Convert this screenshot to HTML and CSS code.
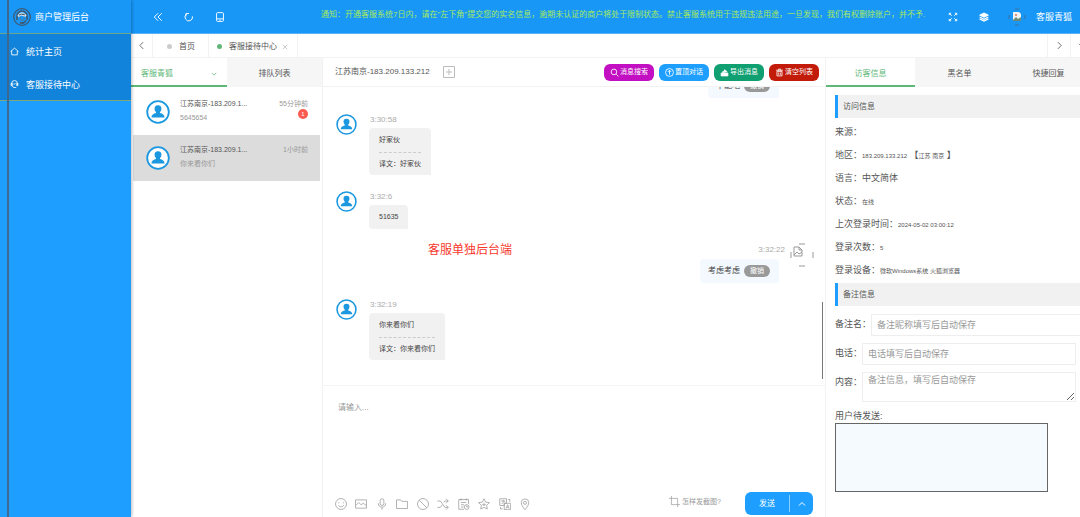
FILE: index.html
```html
<!DOCTYPE html>
<html lang="zh-CN">
<head>
<meta charset="utf-8">
<title>商户管理后台</title>
<link rel="stylesheet" href="styles.css">
</head>
<body>
<svg class="sprite" aria-hidden="true">
  <symbol id="user" viewBox="0 0 24 24"><circle cx="12" cy="12" r="10.8" fill="#fff" stroke="#1b98e0" stroke-width="1.8"/><path d="M12 5.300a3.400 3.400 0 0 1 3.400 3.600c0 1.400-.6 2.500-1.400 3.100v1.100c2.400.5 4.600 1.700 4.600 4.400H5.400c0-2.700 2.200-3.900 4.600-4.400V12c-.8-.6-1.400-1.700-1.400-3.100A3.400 3.400 0 0 1 12 5.300z" fill="#1b98e0" stroke="none"/></symbol>
</svg>
<aside class="sidebar">
  <div class="brand">
    <svg class="logo" viewBox="0 0 20 20"><circle cx="10" cy="10" r="8.300" fill="none" stroke="#3f5871" stroke-width="1.200"/><path d="M5 13V9a5 5 0 0 1 10 0v4M8 15.500c2 1.200 5 .5 6-2" fill="none" stroke="#3f5871" stroke-width="1.600"/><path d="M6 9c1-4 7-4 8 0-3 0-4-1-5-1s-1 2-3 1z" fill="#3f5871"/><path d="M8 10v2c1 2 3 2 4 0v-2" fill="none" stroke="#55718a"/></svg>
    <span>商户管理后台</span>
  </div>
  <nav class="menu">
    <a href="#"><svg class="i9" viewBox="0 0 16 16"><path d="M1 8l7-6 7 6M3 7v7h10V7"/></svg>统计主页</a>
    <a href="#"><svg class="i9" viewBox="0 0 16 16"><path d="M3 9V6a5 5 0 0 1 10 0v3M2 6v4h2V6zM12 6v4h2V6zM4 10c1 4 5 4 7 3M6 7c2 1 3 0 4-1"/></svg>客服接待中心</a>
  </nav>
</aside>
<div class="main">
  <header class="topbar">
    <div class="tools">
      <button aria-label="收起"><svg viewBox="0 0 16 16"><path d="M8 2L2 8l6 6M14 2L8 8l6 6"/></svg></button>
      <button aria-label="刷新"><svg viewBox="0 0 16 16"><path d="M4 3.500A6 6 0 1 0 13.500 7M3 7V2.500h5"/></svg></button>
      <button aria-label="手机"><svg viewBox="0 0 16 16"><path d="M4 1h8q1.500 0 1.500 1.500v11Q13.500 15 12 15H4q-1.500 0-1.500-1.500v-11Q2.500 1 4 1zM3 11h10M7 13h2"/></svg></button>
    </div>
    <p class="notice">通知：开通客服系统7日内，请在"左下角"提交您的实名信息，逾期未认证的商户将处于限制状态。禁止客服系统用于违规违法用途，一旦发现，我们有权删除账户，并不予.</p>
    <div class="account">
      <button aria-label="全屏"><svg viewBox="0 0 16 16"><path d="M2 5V2h3M2 2l4 4M11 2h3v3M14 2l-4 4M2 11v3h3M2 14l4-4M14 11v3h-3M14 14l-4-4"/></svg></button>
      <button aria-label="主题"><svg viewBox="0 0 16 16"><path d="M8 1.500l7 3.500-7 3.500L1 5z" fill="#fff"/><path d="M1 8l7 3.500L15 8M1 11l7 3.500 7-3.500" stroke-width="2"/></svg></button>
      <svg class="photo" viewBox="0 0 18 18"><path d="M7 1h4M7 17h4M1 7v4M17 7v4" stroke="#3c6fa0"/><path d="M5 4h6l2 2v7H5z" fill="#eef3f5" stroke="none"/><path d="M5 12l3-3 2 2 3-2v4H5z" fill="#6d8a78" stroke="none"/><circle cx="8" cy="7" r="1" fill="#e0794a" stroke="none"/></svg>
      <span>客服青狐</span>
    </div>
  </header>
  <nav class="tabs">
    <button class="step" aria-label="向左"><svg viewBox="0 0 16 16"><path d="M11 2L5 8l6 6"/></svg></button>
    <a class="tab" href="#"><i class="dot"></i>首页</a>
    <a class="tab" href="#"><i class="dot on"></i>客服接待中心<svg class="close" viewBox="0 0 16 16"><path d="M2 2l12 12M14 2L2 14"/></svg></a>
    <button class="step last" aria-label="向右"><svg viewBox="0 0 16 16"><path d="M5 2l6 6-6 6"/></svg></button>
    <button class="step cut" aria-label="更多"><svg viewBox="0 0 16 16"><path d="M2 5l6 6 6-6"/></svg></button>
  </nav>
  <div class="work">
    <section class="queue">
      <div class="heads">
        <button class="head active agent">客服青狐<svg viewBox="0 0 16 16"><path d="M2 5l6 6 6-6"/></svg></button>
        <button class="head">排队列表</button>
      </div>
      <ul class="visitors">
        <li><svg class="face"><use href="#user"/></svg><div class="who"><b>江苏南京-183.209.1...</b><span>5645654</span></div><div class="when"><time>55分钟前</time><em>1</em></div></li>
        <li class="current"><svg class="face"><use href="#user"/></svg><div class="who"><b>江苏南京-183.209.1...</b><span>你来看你们</span></div><div class="when"><time>1小时前</time></div></li>
      </ul>
    </section>
    <section class="chat">
      <div class="chathead">
        <span>江苏南京-183.209.133.212</span>
        <button class="add" aria-label="添加"><svg viewBox="0 0 12 12"><path d="M.5.5h11v11H.5zM6 3v6M3 6h6"/></svg></button>
        <div class="actions">
          <button class="purple"><svg viewBox="0 0 16 16"><circle cx="7" cy="7" r="5"/><path d="M11 11l4 4"/></svg>消息搜索</button>
          <button class="blue"><svg viewBox="0 0 16 16"><circle cx="8" cy="8" r="7"/><path d="M8 12V4M5 7l3-3 3 3"/></svg>置顶对话</button>
          <button class="green"><svg viewBox="0 0 16 16"><path d="M2 9h12v5H2zM5 9V6h3V3l5 4" fill="#fff"/></svg>导出消息</button>
          <button class="red"><svg viewBox="0 0 16 16"><path d="M2 4h12M6 4V2h4v2M3.500 6h9v8h-9zM6.500 8v4M9.500 8v4"/></svg>清空列表</button>
        </div>
      </div>
      <div class="log">
        <div class="msg mine"><div class="body"><time>3:30:22</time><div class="bubble">不能吧<button>撤销</button></div></div><i class="pic"></i></div>
        <div class="msg"><svg class="pic"><use href="#user"/></svg><div class="body"><time>3:30:58</time><div class="bubble"><p>好家伙</p><p class="tr">译文：好家伙</p></div></div></div>
        <div class="msg"><svg class="pic"><use href="#user"/></svg><div class="body"><time>3:32:6</time><div class="bubble"><p>51635</p></div></div></div>
        <div class="msg mine"><div class="body"><time>3:32:22</time><div class="bubble">考虑考虑<button>撤销</button></div></div><svg class="pic broken" viewBox="0 0 24 24"><path d="M9 1h6M9 23h6M1 9v6M23 9v6" stroke="#999"/><path d="M4 4h5l3 3v6H4zM9 4v3h3M4 12l3-3 2 2 3-2" stroke="#999"/></svg></div>
        <div class="msg"><svg class="pic"><use href="#user"/></svg><div class="body"><time>3:32:19</time><div class="bubble"><p>你来看你们</p><p class="tr">译文：你来看你们</p></div></div></div>
        <strong class="mark">客服单独后台端</strong>
        <i class="thumb"></i>
      </div>
      <div class="compose">
        <textarea aria-label="消息" placeholder="请输入..."></textarea>
        <div class="foot">
          <div class="icons">
            <button aria-label="表情"><svg viewBox="0 0 16 16"><circle cx="8" cy="8" r="7.300"/><path d="M5 5.500v1.500M11 5.500v1.500M4.500 9.500c1 3 6 3 7 0"/></svg></button>
            <button aria-label="图片"><svg viewBox="0 0 16 16"><path d="M.7 2.500h14.600v11H.7zM1 10l4-4 3 3 3-2 4 3"/></svg></button>
            <button aria-label="语音"><svg viewBox="0 0 16 16"><rect x="5.500" y="1" width="5" height="9" rx="2.500"/><path d="M3 7c0 7 10 7 10 0M8 12.500V15.500"/></svg></button>
            <button aria-label="文件"><svg viewBox="0 0 16 16"><path d="M.7 2.500h5.500l1.500 2h7.600v9.500H.7z"/></svg></button>
            <button aria-label="拉黑"><svg viewBox="0 0 16 16"><circle cx="8" cy="8" r="7.300"/><path d="M3 3l10 10"/></svg></button>
            <button aria-label="转接"><svg viewBox="0 0 16 16"><path d="M.5 4h4l6 8.500h4.500M.5 12.500h4L7 9M9 6l1.500-2H15M12 1l3 3-3 3M12 9.500l3 3-3 3"/></svg></button>
            <button aria-label="工单"><svg viewBox="0 0 16 16"><path d="M14 8V2H1v13h7M4 .5v3M11 .5v3M4 6h7M4 9h4M4 12h3"/><circle cx="11.500" cy="12" r="3.200"/><path d="M11.500 10v2h2"/></svg></button>
            <button aria-label="评价"><svg viewBox="0 0 16 16"><path d="M8 1l2.200 4.500 5 .7-3.700 3.500.9 5L8 12.500l-4.400 2.200.9-5L.8 6.200l5-.7zM5.500 9h5M8 6.500v4"/></svg></button>
            <button aria-label="翻译"><svg viewBox="0 0 16 16"><path d="M1 1h9v6H7v3H1zM3 4h5M5.500 2.500v2M3.500 8l4-4M7 7h8.500v8.500H7zM9.500 14l2-5 2 5M10.500 12.500h2M12 2h2.500v3M2 12v2.500h3"/></svg></button>
            <button aria-label="位置"><svg viewBox="0 0 16 16"><path d="M8 15.500C5 12 3 9 3 6.200a5 5 0 0 1 10 0C13 9 11 12 8 15.500z"/><circle cx="8" cy="6.500" r="2"/></svg></button>
          </div>
          <a class="help" href="#"><svg viewBox="0 0 16 16"><path d="M3.500 0v12.500H16M0 3.500h12.500V16"/></svg>怎样发截图?</a>
          <div class="send"><button>发送</button><button class="more" aria-label="更多"><svg viewBox="0 0 16 16"><path d="M2 11l6-6 6 6"/></svg></button></div>
        </div>
      </div>
    </section>
    <section class="info">
      <div class="heads">
        <button class="head active">访客信息</button>
        <button class="head">黑名单</button>
        <button class="head">快捷回复</button>
      </div>
      <div class="detail">
        <h2>访问信息</h2>
        <dl>
          <div><dt>来源：</dt><dd></dd></div>
          <div><dt>地区：</dt><dd><small>183.209.133.212</small> 【<small>江苏 南京</small> 】</dd></div>
          <div><dt>语言：</dt><dd>中文简体</dd></div>
          <div><dt>状态：</dt><dd><small>在线</small></dd></div>
          <div><dt>上次登录时间：</dt><dd><small>2024-05-02 03:00:12</small></dd></div>
          <div><dt>登录次数：</dt><dd><small>5</small></dd></div>
          <div><dt>登录设备：</dt><dd><small>微软Windows系统 火狐浏览器</small></dd></div>
        </dl>
        <h2>备注信息</h2>
        <form>
          <div class="field wide"><label for="nick">备注名：</label><input id="nick" placeholder="备注昵称填写后自动保存"></div>
          <div class="field"><label for="tel">电话：</label><input id="tel" placeholder="电话填写后自动保存"></div>
          <div class="field"><label for="memo">内容：</label><textarea id="memo" placeholder="备注信息，填写后自动保存"></textarea></div>
          <div class="pending"><label for="pending">用户待发送:</label><textarea id="pending" readonly></textarea></div>
        </form>
      </div>
    </section>
  </div>
</div>
</body>
</html>
```
FILE: styles.css
```css
* { box-sizing: border-box; margin: 0; padding: 0; }
body { display: flex; height: 100vh; overflow: hidden; background: #fff; color: #555; font: 8px/12px "Liberation Sans", "Noto Sans CJK SC", sans-serif; }
button, input, textarea { font: inherit; color: inherit; border: 0; background: none; outline: 0; }
button { display: flex; align-items: center; justify-content: center; white-space: nowrap; }
a { color: inherit; text-decoration: none; }
ul { list-style: none; }
svg { flex: none; fill: none; stroke: currentColor; }
.sprite { display: none; }

.sidebar { position: relative; z-index: 1; flex: none; width: 131px; background: #1e9fff; color: #fff; box-shadow: 1px 0 3px #0004; }
.sidebar::before { content: ""; position: absolute; left: 7px; top: 0; bottom: 0; width: 2px; background: #3d6890; }
.brand { display: flex; align-items: center; gap: 3px; height: 34px; padding-left: 12px; background: #1897f7; border-bottom: 1px solid #6da58a; font-size: 9px; }
.logo { width: 20px; height: 20px; }
.menu { background: #1183da; border-bottom: 1px solid #7fa77c; }
.menu a { display: flex; align-items: center; gap: 7px; height: 33px; padding: 2px 0 0 10px; font-size: 9px; }
.i9 { width: 9px; height: 9px; stroke-width: 1.5; }

.main { flex: 1; min-width: 0; display: flex; flex-direction: column; }
.topbar { flex: none; display: flex; align-items: center; height: 34px; background: #1897f7; color: #fff; border-bottom: 1px solid #58b1f5; }
.tools { display: flex; gap: 21px; padding-left: 22px; width: 190px; flex: none; }
.topbar button svg { width: 10px; height: 10px; stroke-width: 1.5; }
.notice { flex: 1; min-width: 0; line-height: 14px; padding-bottom: 4px; overflow: hidden; white-space: nowrap; color: #a6ea5a; }
.account { flex: none; display: flex; align-items: center; padding: 0 8px 0 22px; gap: 21px; }
.photo { width: 18px; height: 18px; }
.account span { font-size: 9px; }
.account .photo { margin: 0 -11px 0 -2px; }

.tabs { flex: none; display: flex; height: 24px; border-bottom: 1px solid #f2f2f2; color: #555; }
.step { width: 22px; border-right: 1px solid #f2f2f2; }
.step svg { width: 9px; height: 9px; stroke-width: 1.5; }
.step.last { margin-left: auto; border-left: 1px solid #f2f2f2; width: 24px; }
.step.cut { width: 9px; justify-content: flex-start; padding-left: 7px; border: 0; overflow: hidden; }
.tab { display: flex; align-items: center; padding: 2px 13px 0 10px; border-right: 1px solid #f2f2f2; }
.tab + .tab { padding: 2px 9px 0 8px; }
.dot { width: 5px; height: 5px; margin: 0 7px 0 4px; border-radius: 50%; background: #ccc; }
.tab + .tab .dot { margin-left: 0; }
.dot.on { background: #5fb878; }
.close { width: 6px; height: 6px; margin-left: 5px; color: #bbb; stroke-width: 2; }

.work { flex: 1; min-height: 0; display: flex; }
.heads { flex: none; display: flex; height: 29px; background: #f6f6f6; }
.head { flex: 1; padding-top: 2px; font-size: 8px; }
.head.active { background: #fff; color: #5fb878; border-bottom: 2px solid #5fb878; padding-top: 4px; }
.queue { flex: none; width: 192px; border-right: 1px solid #f2f2f2; }
.head.agent { justify-content: space-between; flex: none; width: 96px; padding: 4px 10px 0; }
.agent svg { width: 6px; height: 6px; stroke-width: 2; }
.visitors { padding: 2px 2px 0; font-size: 7px; }
.visitors li { display: flex; height: 46px; padding: 9px 12px 0 13px; gap: 10px; color: #999; }
.visitors .current { background: #dcdcdc; }
.face { width: 24px; height: 24px; margin-top: 2px; }
.who { flex: 1; display: flex; flex-direction: column; gap: 2px; white-space: nowrap; }
.who b { font-weight: 400; color: #555; }
.when { display: flex; flex-direction: column; align-items: flex-end; white-space: nowrap; padding-top: 1px; }
.when time { line-height: 10px; }
.when em { width: 10px; height: 10px; border-radius: 50%; background: #fb5a50; color: #fff; font: 6px/10px "Liberation Sans", sans-serif; text-align: center; }

.chat { flex: 1; min-width: 0; display: flex; flex-direction: column; }
.chathead { flex: none; display: flex; align-items: center; height: 29px; padding: 0 6px 0 12px; border-bottom: 1px solid #f2f2f2; }
.add { margin-left: 13px; color: #bbb; }
.add svg { width: 12px; height: 12px; }
.actions { display: flex; gap: 5px; margin-left: auto; font-size: 7px; color: #fff; }
.actions button { width: 50px; height: 17px; gap: 1px; border-radius: 6px; }
.actions svg { width: 9px; height: 9px; stroke-width: 1.5; }
.purple { background: #c10fc1; }
.blue { background: #1e9fff; }
.green { background: #0f9f71; }
.red { background: #c21b0a; }
.log { position: relative; flex: 1; min-height: 0; display: flex; flex-direction: column; justify-content: flex-end; gap: 16px; padding: 0 11px 25px 13px; overflow: hidden; }
.msg { flex: none; display: flex; align-items: flex-start; gap: 12px; }
.mine { justify-content: flex-end; gap: 4px; }
.pic { flex: none; width: 21px; height: 21px; }
.pic.broken { width: 24px; height: 24px; margin-top: -2px; }
i.pic { width: 24px; }
.body { display: flex; flex-direction: column; align-items: flex-start; }
.mine .body { align-items: flex-end; }
.body time { height: 14px; line-height: 12px; padding-left: 1px; color: #aaa; }
.mine time { line-height: 10px; padding-right: 1px; }
.bubble { padding: 0 10px; border-radius: 4px; border-bottom-right-radius: 0; background: #f1f1f1; font-size: 7px; line-height: 24px; color: #444; }
.bubble .tr { height: 23px; border-top: 1px dashed #ccc; line-height: 22px; }
.mine .bubble { display: flex; align-items: center; gap: 4px; height: 24px; margin-right: 7px; padding: 0 9px 0 8px; background: #f3f9ff; font-size: 8px; }
.bubble button { width: 26px; height: 12px; border-radius: 6px; background: #999; color: #fff; font-size: 7px; line-height: 12px; }
.mark { position: absolute; left: 105px; top: 154px; color: #f6382d; font-size: 12px; line-height: 18px; font-weight: 400; }
.thumb { position: absolute; right: 2px; bottom: 6px; width: 1px; height: 77px; background: #777; }
.compose { flex: none; display: flex; flex-direction: column; height: 132px; border-top: 1px solid #f5f5f5; }
.compose textarea { flex: 1; padding: 16px 15px; resize: none; }
::placeholder { color: #999; opacity: 1; }
.foot { display: flex; align-items: center; height: 27px; padding: 0 12px; color: #999; }
.icons { display: flex; justify-content: space-between; width: 196px; }
.icons svg { width: 12px; height: 12px; }
.help { display: flex; align-items: center; gap: 2px; margin-left: auto; font-size: 7px; line-height: 10px; padding-bottom: 4px; }
.help svg { width: 11px; height: 11px; }
.send { display: flex; height: 23px; margin-left: 24px; border-radius: 6px; background: #1e9fff; color: #fff; }
.send button { width: 44px; }
.send .more { width: 24px; margin: 3px 0; border-left: 1px solid #8fd0ff; }
.more svg { width: 8px; height: 8px; stroke-width: 2; }

.info { flex: none; width: 255px; overflow: hidden; border-left: 1px solid #f2f2f2; }
.info .head { flex: none; width: 89px; }
.detail { padding: 8px 0 0 9px; font-size: 9px; }
.detail h2 { height: 23px; padding-left: 5px; border-left: 3px solid #1e9fff; background: #f1f1f1; font-size: 8px; line-height: 24px; font-weight: 400; }
.detail dl { padding: 3px 0 1px; }
.detail dl div { display: flex; height: 23px; line-height: 23px; white-space: nowrap; }
.detail small { font-size: 6px; }
form { display: flex; flex-direction: column; gap: 7px; padding-top: 8px; }
.field { display: flex; padding-right: 4px; line-height: 20px; }
.field.wide { padding-right: 0; }
.field label { flex: none; }
.field input, .field textarea { flex: 1; min-width: 0; height: 22px; padding: 0 5px; border: 1px solid #eee; }
.field.wide input { border-right: 0; }
.field textarea { height: 30px; line-height: 14px; resize: vertical; }
.pending { display: flex; flex-direction: column; }
.pending label { line-height: 14px; }
.pending textarea { height: 69px; margin-right: 32px; border: 1px solid #666; background: #f5faff; resize: none; }
```
